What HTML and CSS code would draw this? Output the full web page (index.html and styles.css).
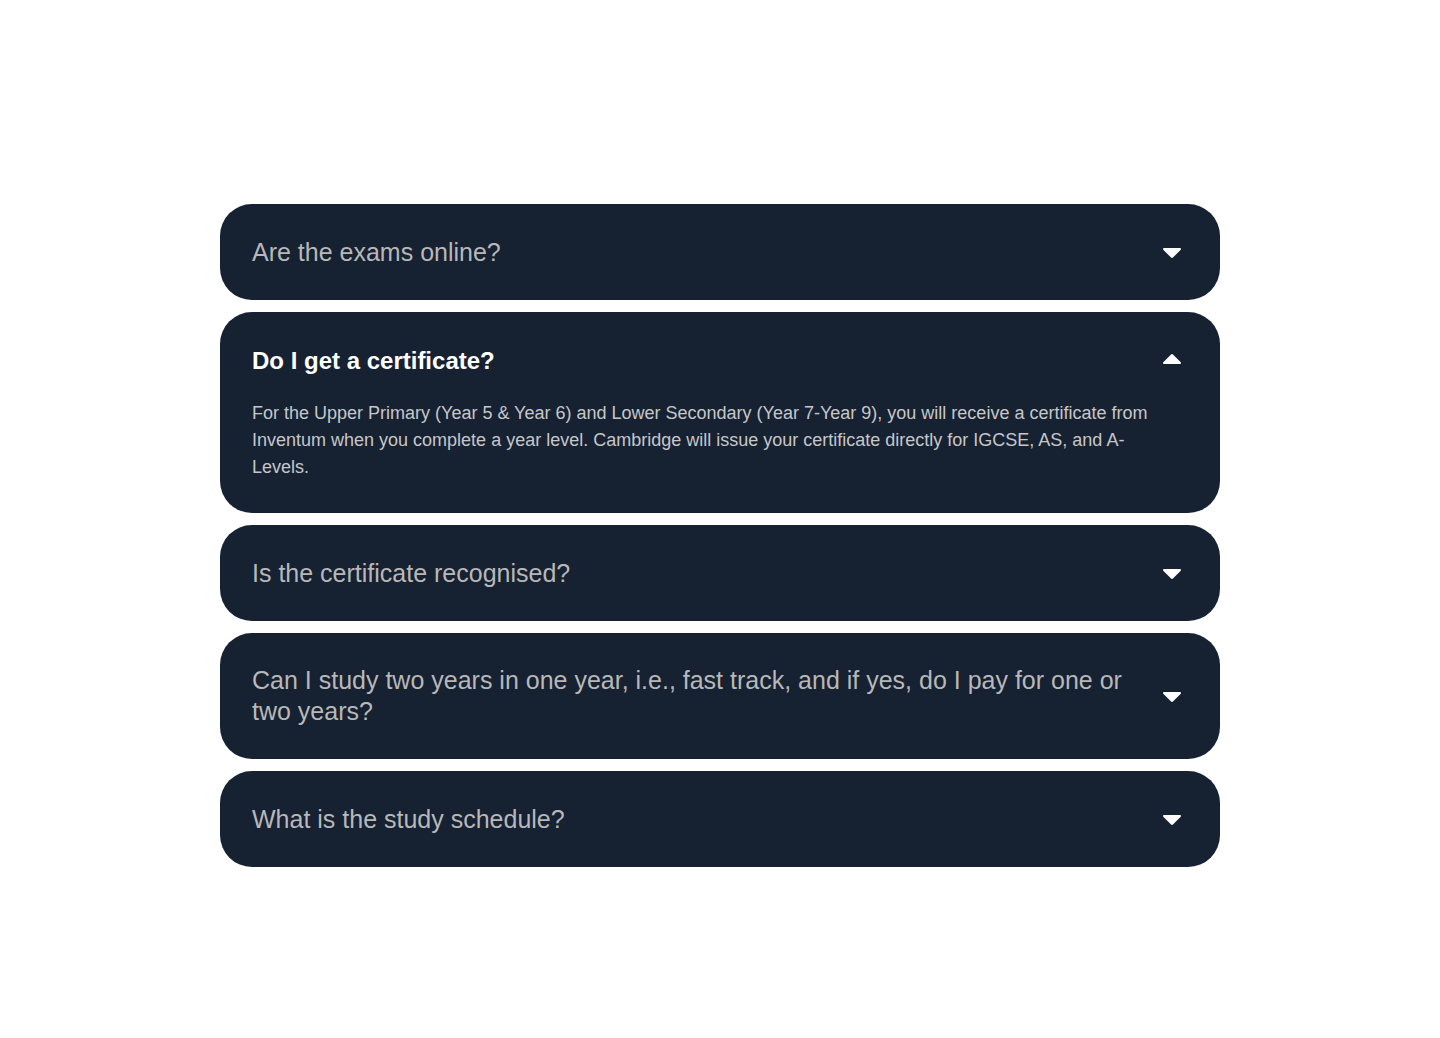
FILE: index.html
```html
<!DOCTYPE html>
<html lang="en">
<head>
<meta charset="utf-8">
<meta name="viewport" content="width=device-width, initial-scale=1">
<title>Frequently asked questions</title>
<link rel="stylesheet" href="styles.css">
</head>
<body>
<svg class="icon-defs" aria-hidden="true">
  <symbol id="caret" viewBox="0 0 32 32"><path d="M8 12H24Q25 12 25 13Q25 13.6 24.5 14L17.2 21.3Q16 22.5 14.8 21.3L7.5 14Q7 13.6 7 13Q7 12 8 12Z"/></symbol>
</svg>
<main class="faq">
  <section class="faq-item">
    <h2 class="faq-heading"><button class="faq-toggle" type="button" aria-expanded="false" aria-controls="answer-exams"><span class="faq-question">Are the exams online?</span><svg class="faq-caret" aria-hidden="true"><use href="#caret"/></svg></button></h2>
    <p class="faq-answer" id="answer-exams" hidden></p>
  </section>
  <section class="faq-item">
    <h2 class="faq-heading"><button class="faq-toggle" type="button" aria-expanded="true" aria-controls="answer-certificate"><span class="faq-question">Do I get a certificate?</span><svg class="faq-caret" aria-hidden="true"><use href="#caret"/></svg></button></h2>
    <p class="faq-answer" id="answer-certificate">For the Upper Primary (Year 5 &amp; Year 6) and Lower Secondary (Year 7-Year 9), you will receive a certificate from Inventum when you complete a year level. Cambridge will issue your certificate directly for IGCSE, AS, and A-Levels.</p>
  </section>
  <section class="faq-item">
    <h2 class="faq-heading"><button class="faq-toggle" type="button" aria-expanded="false" aria-controls="answer-recognised"><span class="faq-question">Is the certificate recognised?</span><svg class="faq-caret" aria-hidden="true"><use href="#caret"/></svg></button></h2>
    <p class="faq-answer" id="answer-recognised" hidden></p>
  </section>
  <section class="faq-item">
    <h2 class="faq-heading"><button class="faq-toggle" type="button" aria-expanded="false" aria-controls="answer-fast-track"><span class="faq-question">Can I study two years in one year, i.e., fast track, and if yes, do I pay for one or two years?</span><svg class="faq-caret" aria-hidden="true"><use href="#caret"/></svg></button></h2>
    <p class="faq-answer" id="answer-fast-track" hidden></p>
  </section>
  <section class="faq-item">
    <h2 class="faq-heading"><button class="faq-toggle" type="button" aria-expanded="false" aria-controls="answer-schedule"><span class="faq-question">What is the study schedule?</span><svg class="faq-caret" aria-hidden="true"><use href="#caret"/></svg></button></h2>
    <p class="faq-answer" id="answer-schedule" hidden></p>
  </section>
</main>
</body>
</html>
```
FILE: styles.css
```css
* {
  box-sizing: border-box;
}

body {
  margin: 0;
  background: #fff;
  font-family: "Liberation Sans", Arial, sans-serif;
}

.icon-defs {
  display: none;
}

.faq {
  display: flex;
  flex-direction: column;
  gap: 12px;
  max-width: 1040px;
  margin: 0 auto;
  padding: 204px 20px 96px;
}

.faq-item {
  padding: 32px;
  border-radius: 32px;
  background: #162132;
}

.faq-heading {
  margin: 0;
}

.faq-toggle {
  display: flex;
  align-items: center;
  gap: 24px;
  width: 100%;
  min-height: 32px;
  padding: 0;
  border: 0;
  background: none;
  color: #b8b8b8;
  font: 500 25px/31px "Liberation Sans", Arial, sans-serif;
  text-align: left;
  cursor: pointer;
}

.faq-toggle[aria-expanded="true"] {
  color: #fff;
  font-size: 24px;
  font-weight: 700;
}

.faq-question {
  flex: 1;
}

.faq-caret {
  flex: none;
  width: 32px;
  height: 32px;
  fill: #fff;
}

.faq-toggle[aria-expanded="true"] .faq-caret {
  transform: rotate(180deg);
}

.faq-answer {
  margin: 24px 40px 0 0;
  color: #c6c7c9;
  font-size: 18px;
  line-height: 27px;
}
```
